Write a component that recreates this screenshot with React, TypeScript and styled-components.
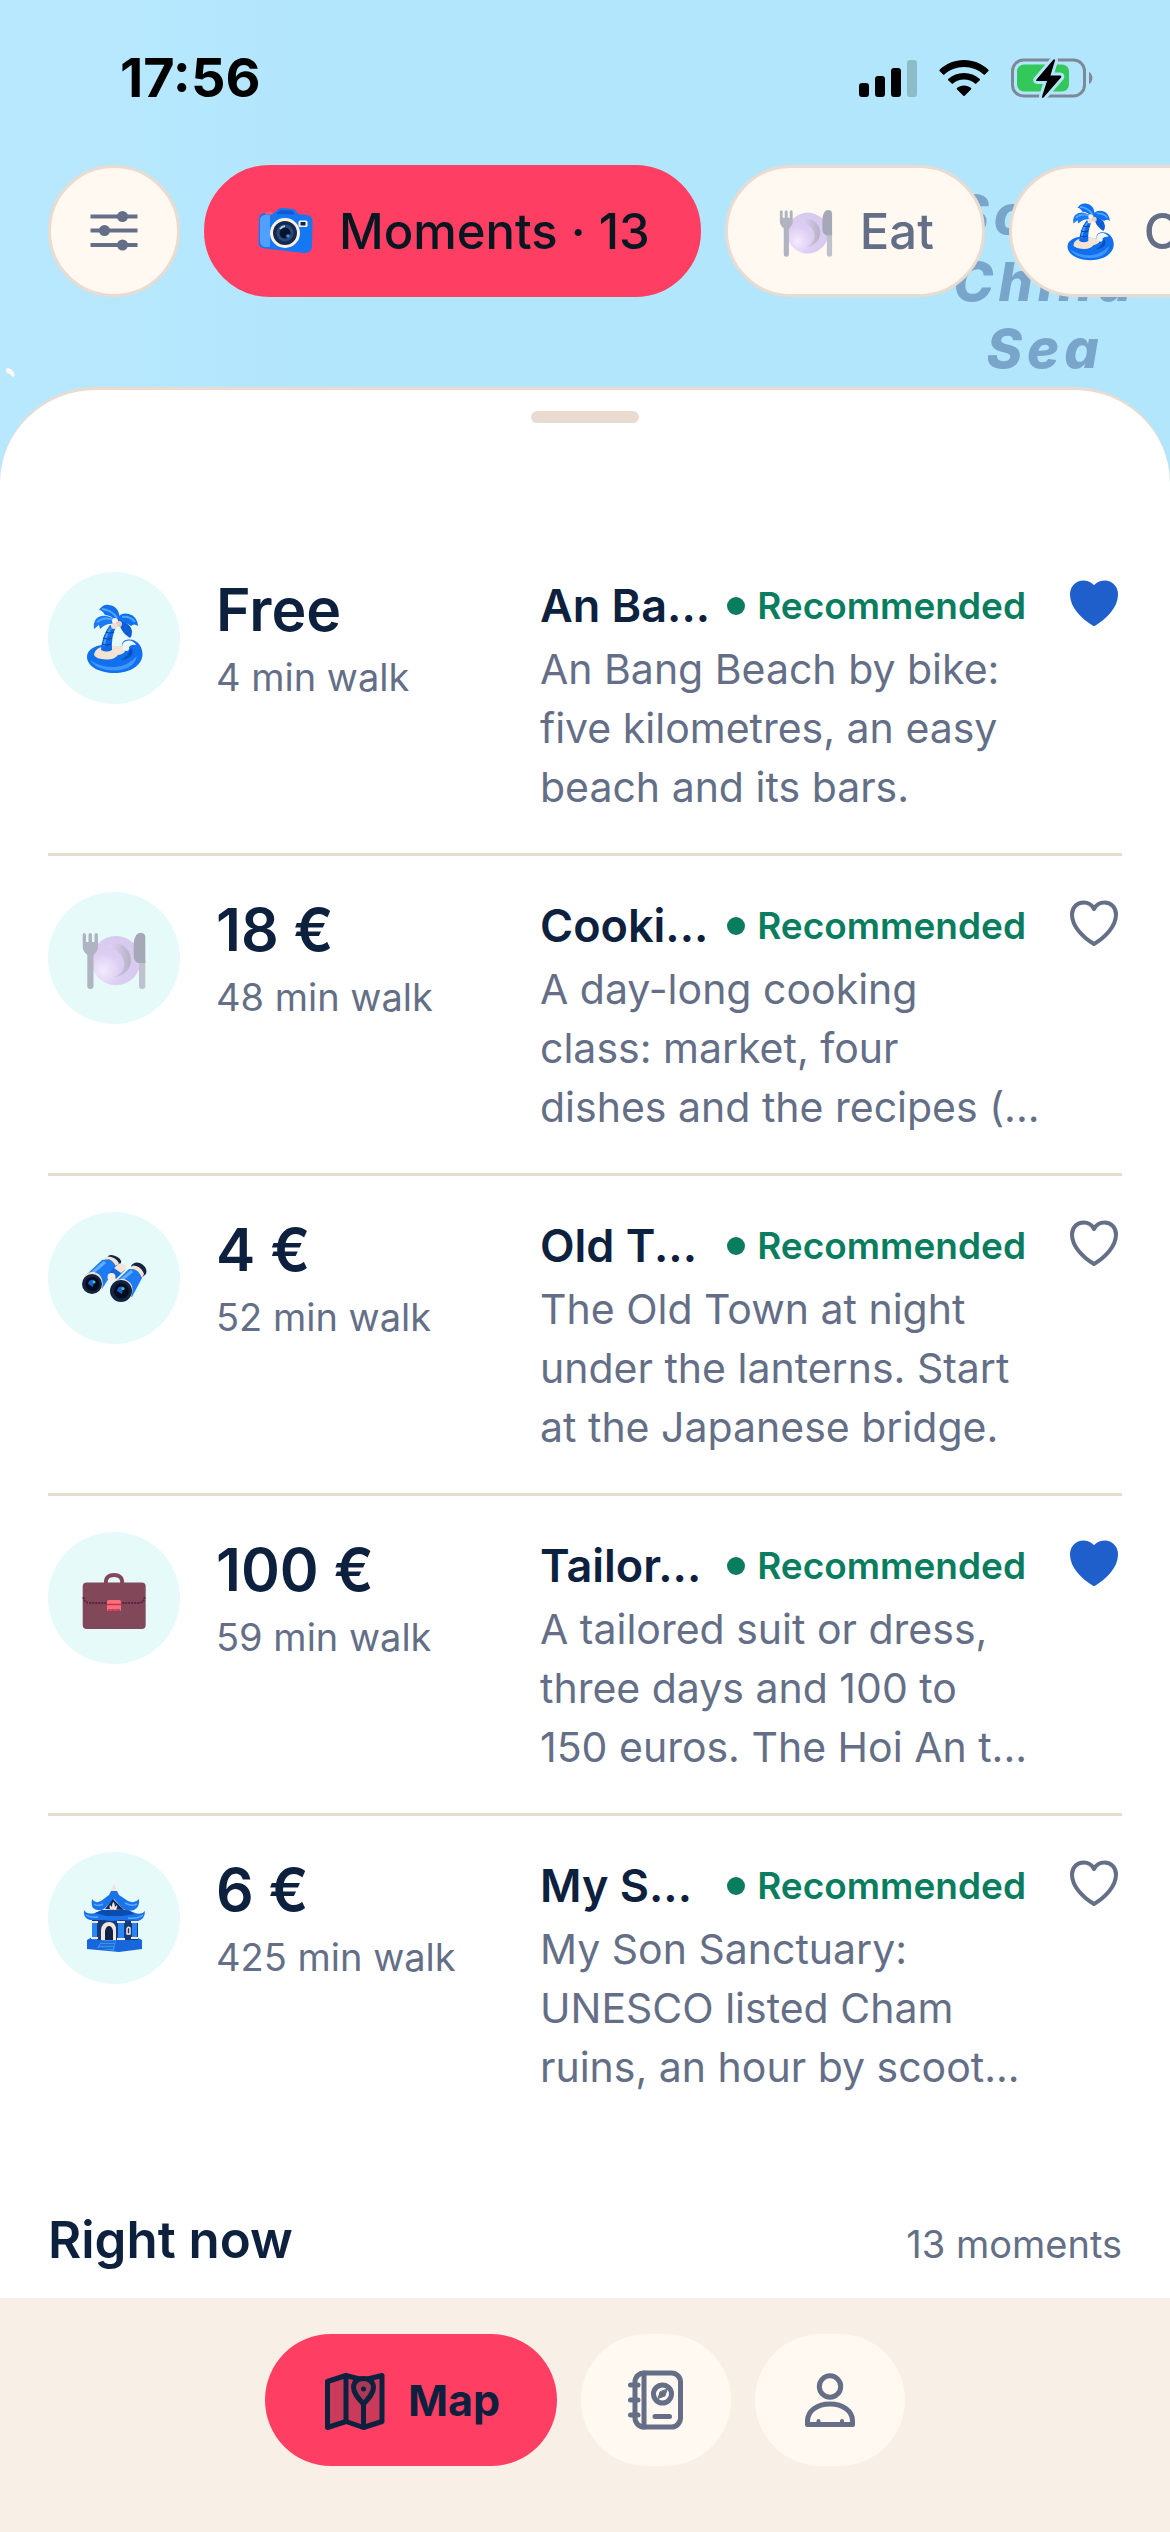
import React, { useState } from "react";
import styled, { createGlobalStyle } from "styled-components";

const Colour = {
  sky: "#b2e6fc",
  label: "#79a5cb",
  primary: "#ff3e63",
  cream: "#fff9f2",
  sand: "#f8efe6",
  border: "#eadbd0",
  navy: "#0d213f",
  ink: "#061722",
  grey: "#646f87",
  green: "#0a7d5f",
  heart: "#1f5fcc",
  mint: "#e6fafa",
};

interface IMoment {
  id: string;
  icon: React.ReactNode;
  price: string;
  walk: string;
  name: string;
  lines: string;
  saved: boolean;
}

const GlobalStyle = createGlobalStyle`
  * {
    box-sizing: border-box;
  }
  body {
    margin: 0;
    background: ${Colour.sky};
    font-family: Inter, "Liberation Sans", sans-serif;
    color: ${Colour.navy};
  }
  button {
    font-family: inherit;
    margin: 0;
    cursor: pointer;
  }
`;

const Screen = styled.div`
  position: relative;
  min-height: 100vh;
  display: flex;
  flex-direction: column;
  overflow: hidden;
  background: linear-gradient(90deg, #b8e8fe 0, ${Colour.sky} 30%);
`;

const SeaLabel = styled.div`
  position: absolute;
  top: 181px;
  right: 23px;
  width: 204px;
  color: ${Colour.label};
  font-size: 54px;
  line-height: 67px;
  font-weight: 800;
  font-style: italic;
  letter-spacing: 5px;
  text-align: center;
`;

const Islet = styled.svg`
  position: absolute;
  top: 366px;
  left: 3px;
`;

const StatusBar = styled.div`
  position: relative;
  display: flex;
  justify-content: space-between;
  padding: 48px 76px 57px 120px;
  color: #000;
`;

const Time = styled.time`
  font-size: 54px;
  line-height: 60px;
  font-weight: 700;
`;

const StatusIcons = styled.div`
  display: flex;
  align-items: center;
  gap: 22px;
  height: 60px;
`;

const Filters = styled.div`
  position: relative;
  display: flex;
  gap: 24px;
  padding: 0 0 0 48px;
  margin-bottom: 90px;
  overflow: hidden;
`;

const Chip = styled.button<{ $active?: boolean }>`
  flex: none;
  display: flex;
  align-items: center;
  gap: 24px;
  height: 132px;
  padding: 0 48px;
  border: 3px solid ${(props) => (props.$active ? Colour.primary : Colour.border)};
  border-radius: 66px;
  background: ${(props) => (props.$active ? Colour.primary : Colour.cream)};
  color: ${(props) => (props.$active ? Colour.ink : Colour.grey)};
  font-size: 49px;
  font-weight: 500;
  white-space: nowrap;
`;

const RoundChip = styled(Chip)`
  width: 132px;
  padding: 0;
  justify-content: center;
`;

const Sheet = styled.main`
  position: relative;
  flex: 1;
  padding: 21px 48px 0;
  border-top: 3px solid ${Colour.border};
  border-radius: 96px 96px 0 0;
  background: #fff;
`;

const Handle = styled.div`
  width: 108px;
  height: 12px;
  margin: 0 auto 113px;
  border-radius: 6px;
  background: ${Colour.border};
`;

const List = styled.ul`
  margin: 0;
  padding: 0;
  list-style: none;
`;

const Item = styled.li`
  display: grid;
  grid-template-columns: 132px 288px minmax(0, 1fr) 60px;
  gap: 36px;
  padding: 36px 0;
  border-bottom: 3px solid ${Colour.border};
  &:last-child {
    border-bottom: none;
  }
`;

const Bubble = styled.div`
  display: flex;
  align-items: center;
  justify-content: center;
  width: 132px;
  height: 132px;
  border-radius: 50%;
  background: ${Colour.mint};
`;

const Price = styled.div`
  font-size: 59px;
  line-height: 75px;
  font-weight: 600;
`;

const Walk = styled.div`
  font-size: 38px;
  line-height: 60px;
  color: ${Colour.grey};
  white-space: nowrap;
`;

const TitleRow = styled.div`
  display: flex;
  align-items: center;
  justify-content: space-between;
`;

const Name = styled.h3`
  margin: 0;
  font-size: 45px;
  line-height: 68px;
  font-weight: 600;
  white-space: nowrap;
`;

const Tag = styled.span`
  display: flex;
  align-items: center;
  gap: 12px;
  color: ${Colour.green};
  font-size: 37px;
  line-height: 68px;
  font-weight: 600;
  &::before {
    content: "";
    width: 18px;
    height: 18px;
    border-radius: 50%;
    background: ${Colour.green};
  }
`;

const Description = styled.p`
  margin: 0;
  font-size: 41px;
  line-height: 59px;
  color: ${Colour.grey};
  white-space: pre;
`;

const HeartButton = styled.button`
  display: block;
  width: 60px;
  height: 60px;
  padding: 8px 4px 4px 8px;
  border: none;
  background: none;
`;

const SectionHead = styled.header`
  display: flex;
  align-items: baseline;
  justify-content: space-between;
  padding: 74px 0 24px;
`;

const SectionTitle = styled.h2`
  margin: 0;
  font-size: 51px;
  line-height: 66px;
  font-weight: 600;
`;

const Count = styled.span`
  font-size: 38px;
  color: ${Colour.grey};
`;

const TabBar = styled.nav`
  position: relative;
  display: flex;
  justify-content: center;
  gap: 24px;
  padding: 36px 0 66px;
  background: ${Colour.sand};
`;

const Tab = styled.button<{ $active?: boolean }>`
  display: flex;
  align-items: center;
  justify-content: center;
  gap: 20px;
  min-width: 150px;
  height: 132px;
  padding: 0 ${(props) => (props.$active ? "57px" : "0")};
  border: none;
  border-radius: 66px;
  background: ${(props) => (props.$active ? Colour.primary : Colour.cream)};
  color: ${(props) => (props.$active ? Colour.navy : Colour.grey)};
  font-size: 43px;
  font-weight: 700;
`;

const SignalIcon = () => (
  <svg width="58" height="38" viewBox="0 0 58 38">
    <rect x="0" y="24" width="10" height="14" rx="3" />
    <rect x="16" y="17" width="10" height="21" rx="3" />
    <rect x="32" y="9" width="10" height="29" rx="3" />
    <rect x="48" y="1" width="10" height="37" rx="3" fill="#8dbcc6" />
  </svg>
);

const WifiIcon = () => (
  <svg width="50" height="38" viewBox="0 0 50 38">
    <path d="M25 1C15.600 1 7 4.700 0.600 10.700Q0 11.400 0.600 12L4 15.500Q4.700 16.100 5.400 15.500C10.600 10.800 17.400 8 25 8S39.400 10.800 44.600 15.500Q45.300 16.100 46 15.500L49.400 12Q50 11.400 49.400 10.700C43 4.700 34.400 1 25 1Z" />
    <path d="M25 14C19 14 13.400 16.200 9.200 20Q8.600 20.600 9.200 21.200L12.700 24.600Q13.300 25.200 14 24.600C17 22 20.800 20.500 25 20.500S33 22 36 24.600Q36.700 25.200 37.300 24.600L40.800 21.200Q41.400 20.600 40.800 20C36.600 16.200 31 14 25 14Z" />
    <path d="M25 26.500C22.300 26.500 19.800 27.400 17.900 29Q17.300 29.600 17.900 30.200L24.300 36.700Q25 37.400 25.700 36.700L32.100 30.200Q32.700 29.600 32.100 29C30.200 27.400 27.700 26.500 25 26.500Z" />
  </svg>
);

const BatteryIcon = () => (
  <svg width="83" height="44" viewBox="0 0 83 44">
    <rect x="1.500" y="4" width="72" height="36" rx="11" fill="none" stroke="#7d8898" strokeWidth="3" />
    <path d="M78 16C82.500 18 82.500 26 78 28Z" fill="#7d8898" />
    <rect x="6" y="8.500" width="52" height="27" rx="7" fill="#34c759" />
    <path
      d="M42.500 3.500 25.500 23.500Q24.500 25 26.500 25H36L31 40.500Q31 43 33 41L50 21.500Q51 19.500 49 19.500H39.500L44 4.500Q44 2.500 42.500 3.500Z"
      stroke={Colour.sky}
      strokeWidth="6"
      paintOrder="stroke"
    />
  </svg>
);

const SlidersIcon = () => (
  <svg width="48" height="48" viewBox="0 0 48 48" fill={Colour.grey} stroke={Colour.grey}>
    <path d="M.5 9.500H47.500M.5 23.500H47.500M.5 38H47.500" strokeWidth="4" />
    <circle cx="32.500" cy="9.500" r="5.500" stroke="none" />
    <circle cx="14.500" cy="23.500" r="5.500" stroke="none" />
    <circle cx="32.500" cy="38" r="5.500" stroke="none" />
  </svg>
);

const CameraIcon = () => (
  <svg width="60" height="60" viewBox="0 0 60 60">
    <path
      d="M4 17Q5 12 11 12H19L23 8.500Q24 7 27 7L38 8Q40 8 41 10L43 13L52 14Q58 15 57.500 21L57 46Q56 52 49 52L10 47.500Q3.500 47 3.500 41Z"
      fill="#1677f2"
    />
    <path d="M5 18Q6 14 12 13.500L15 14V46L10 46Q5 45 5 40Z" fill="#4fa0ff" />
    <path d="M21 13 25 9.500H37L40 13.500Z" fill="#0d5bd0" />
    <path d="M10 13.500Q10 10.500 14 10.500T18 13.500Z" fill="#ff5b6e" />
    <rect x="43.500" y="19.500" width="9" height="6.500" rx="1.500" fill="#fff5ea" />
    <rect x="45.500" y="21" width="5" height="3.500" fill="#0f2347" />
    <circle cx="30" cy="32" r="15" fill="#fff1e2" />
    <circle cx="30" cy="32" r="12" fill="#14294f" />
    <circle cx="30" cy="32" r="8.500" fill="#2b4a78" />
    <circle cx="30" cy="32" r="5.500" fill="#07152c" />
    <path d="M25 28Q27 25.500 30 25" fill="none" stroke="#a9c8ee" strokeWidth="2" />
    <circle cx="33" cy="35" r="1.800" fill="#3d8df5" />
  </svg>
);

const PlateIcon = ({ size = 72 }: { size?: number }) => (
  <svg width={size} height={size} viewBox="0 0 72 72">
    <defs>
      <radialGradient id="plate" cx="25%" cy="70%" r="70%">
        <stop offset="0" stopColor="#f3ebff" />
        <stop offset="0.500" stopColor="#dccdf2" />
        <stop offset="1" stopColor="#d8c9ee" />
      </radialGradient>
      <linearGradient id="dish" x1="0" y1="0" x2="1" y2="0">
        <stop offset="0.300" stopColor="#dccdf2" />
        <stop offset="1" stopColor="#b4b2c2" />
      </linearGradient>
    </defs>
    <circle cx="38" cy="38.500" r="24.600" fill="url(#plate)" />
    <path d="M25 25A17 17 0 1 1 36 55C52 50 50 27 25 25Z" fill="url(#dish)" />
    <path
      d="M4.700 13Q4.700 11 6.300 11T8 13V20H10.500V13Q10.500 11 12.200 11T14 13V20H16.500V13Q16.500 11 18.200 11T20 13V25Q20 29 15.500 33V64Q15.500 67 12.400 67T9.300 64V33Q4.700 29 4.700 25Z"
      fill="#b0b3c0"
    />
    <path d="M61 38H67.300V64Q67.300 67 64.200 67T61 64Z" fill="#bfc1cd" />
    <path d="M67.300 41H60Q55.700 39 55.700 34V21Q57 10.700 62.500 10.700T67.300 17Z" fill="#a5a8b6" />
  </svg>
);

const PalmIcon = ({ size = 72 }: { size?: number }) => (
  <svg width={size} height={size} viewBox="0 0 72 72">
    <path
      d="M9 55C9 48 16 44 24 43L44 45Q43 38 50 37.500C60 37 64.500 45 64.500 52C64.500 64 51 71 36.500 71C21 71 9 64 9 55Z"
      fill="#1170ee"
    />
    <path d="M12 58Q24 66 37 65T59 54Q56 68 36 68.500Q18 68 12 58Z" fill="#3f97fb" />
    <path d="M16 53Q17 44 32 44Q46 43 47 49Q46 52 40 53Q36 58 28 57.500Q18 57 16 53Z" fill="#f2e3d3" />
    <path d="M44 45Q44 38 52 38.500Q57 40 58 43Q53 42 51 45Q52 48 49 49Q45 49 44 45Z" fill="#eef7ff" />
    <path d="M52 46Q56 48 54 53Q51 57 43 58Q52 53 52 46Z" fill="#0a4fbd" />
    <path d="M23 48Q24 33 32 23L38 25Q33 35 34 48Q29 51 23 48Z" fill="#0f69e8" />
    <path d="M26 44Q27 34 33 26" fill="none" stroke="#4aa0ff" strokeWidth="2" />
    <path d="M24 42Q29 44 33 42M25 36Q30 38 34 36M28 30Q32 32 36 30" fill="none" stroke="#083f9c" strokeWidth="1.200" />
    <path d="M38 19Q33 13 27 13Q24 8 21 8Q25 2 31 3Q41 4 42 17Z" fill="#1170ee" />
    <path d="M38 18Q25 10 18 17Q15 21 16 27L21 23L22 27Q28 21 36 22Z" fill="#1a7bf5" />
    <path d="M39 17Q43 10 51 12Q59 14 60 24Q56 21 53 24Q48 20 40 21Z" fill="#1170ee" />
    <path d="M40 19Q53 20 54 30Q54 34 52 36Q44 31 42 24Z" fill="#0d5ed6" />
    <path d="M24 7Q34 8 39 16M19 20Q26 14 36 18M44 15Q52 14 57 20" fill="none" stroke="#4fa6ff" strokeWidth="2" />
    <circle cx="37" cy="19" r="3" fill="#fbeee4" />
    <circle cx="41" cy="22" r="3" fill="#e5cfc4" />
    <circle cx="36" cy="24" r="3" fill="#f1dfd5" />
  </svg>
);

const BinocularsIcon = () => (
  <svg width="72" height="72" viewBox="0 0 72 72">
    <path d="M29 16Q30 12 36 13.500Q44 16 43 21L37 27Z" fill="#14233f" />
    <path d="M53 24Q56 19 62 21Q70 25 68 32L62 37Z" fill="#14233f" />
    <path d="M7 34 24 18Q35 15 38 25L24 47Z" fill="#1d7cf3" />
    <path d="M13 32 27 20" stroke="#62aeff" strokeWidth="3" />
    <path d="M35 42 51 27Q61 26 64 36L54 55Z" fill="#1d7cf3" />
    <path d="M42 39 54 29" stroke="#62aeff" strokeWidth="3" />
    <path d="M25 17.500Q34 15 38 25L41 21Q37 14 29 14.500Z" fill="#f4e4d6" />
    <path d="M51 26.500Q60 26 64 36L66 32Q63 24 55 23.500Z" fill="#f4e4d6" />
    <path d="M31 31 38 23L47 28L38 37Z" fill="#1567da" />
    <path d="M36 26 41 21.500Q49 21 48 27L43 31Z" fill="#f4e4d6" />
    <circle cx="33.500" cy="35" r="4" fill="#f8ecdf" />
    <path d="M5 37Q8 29 16 30Q27 33 24 48Z" fill="#f4e4d6" />
    <path d="M33 44Q37 36 46 37Q58 41 53 55Z" fill="#f4e4d6" />
    <circle cx="14" cy="42" r="10" fill="#14233f" />
    <circle cx="14.500" cy="42" r="7" fill="#040d1e" />
    <path d="M10 42Q11 37 16 38L15 45Z" fill="#1e5fd0" />
    <circle cx="16" cy="40" r="1.500" fill="#36d0c0" />
    <circle cx="43" cy="49" r="11" fill="#14233f" />
    <circle cx="43.500" cy="49" r="7.500" fill="#040d1e" />
    <path d="M39 49Q40 43 45 45L44 52Z" fill="#1e5fd0" />
    <circle cx="45" cy="46.500" r="1.500" fill="#36d0c0" />
  </svg>
);

const BriefcaseIcon = () => (
  <svg width="72" height="72" viewBox="0 0 72 72">
    <path d="M28 22Q27 13 36 13T44 22" fill="none" stroke="#82485a" strokeWidth="4" />
    <rect x="4.700" y="20.500" width="63" height="46.500" rx="4" fill="#82485a" />
    <path d="M5.500 35Q6 41 12 41H60Q66 41 66.500 35" fill="none" stroke="#5f2340" strokeWidth="2" strokeDasharray="2 1" />
    <rect x="29" y="38" width="14" height="11" rx="1.500" fill="#f9707c" />
    <path d="M29 42.500H43M30 48H42" stroke="#c9304f" strokeWidth="1.500" />
    <path d="M10 48H64M14 56H62M9 63H64" stroke="#5e5468" strokeWidth="1" strokeDasharray="1 5" />
  </svg>
);

const TempleIcon = () => (
  <svg width="72" height="72" viewBox="0 0 72 72">
    <path d="M36 2Q39 6 38 10H33Q33 6 36 2Z" fill="#f0e4de" />
    <path d="M9 58 14 55H58L64 58V67L41 70L9 67Z" fill="#1766dc" />
    <rect x="14" y="38" width="46" height="20" fill="#123a7c" />
    <path d="M14 40H19V58H14ZM40 40H46V58H40ZM54 40H59V57H54Z" fill="#2b86f5" />
    <path d="M13 40H20M39 40H47M53 40H60M13 56H20M39 57H47M53 56H60" stroke="#f3e6dc" strokeWidth="2" />
    <path d="M23 58V48Q24 40 31 40T38 48V58Z" fill="#f3e6dc" />
    <path d="M27 58V49Q28 44 31 44T35 49V58Z" fill="#0f2347" />
    <path d="M49 52V47Q50 44 52 46V52Z" fill="none" stroke="#f3e6dc" strokeWidth="1.500" />
    <path
      d="M6 28Q9 33 17 31L24 28H50L57 31Q64 33 67 29Q67 37 60 39L43 38Q34 40 26 38L12 38Q5 36 6 28Z"
      fill="#1a73ea"
    />
    <path d="M17 31 24 28H50L57 32L44 34H28Z" fill="#0d4caf" />
    <path
      d="M14 17Q17 22 23 19L31 13L33 9H39L41 13L50 19Q57 22 61 17Q62 25 56 28Q50 30 45 27L36 17L26 27Q20 30 15 26Q13 23 14 17Z"
      fill="#1a73ea"
    />
    <path d="M27 27 35 17L46 28Z" fill="#102a5c" />
    <path d="M32 27Q31 24 32 23L34 25Q34 21 35.500 20Q37 22 37 25L39 23Q40 25 38 28Z" fill="#f3e6dc" />
    <path d="M8 33Q12 36 20 35M50 36Q60 37 65 33M16 22Q19 25 25 22M47 21Q54 25 59 22" fill="none" stroke="#5aaaff" strokeWidth="1.500" />
    <path d="M24 58H38L36 69L19 66Z" fill="#3990f7" />
    <path d="M23 60H37M22 63H36M21 66H35" stroke="#0d4caf" strokeWidth="1" />
  </svg>
);

const HeartIcon = ({ filled }: { filled: boolean }) => (
  <svg width="48" height="48" viewBox="0 0 48 48">
    <path
      d="M24 44C13 37.500 2 26.500 2 14.500C2 7.500 7 2.500 13.500 2.500C18 2.500 22 5 24 9C26 5 30 2.500 34.500 2.500C41 2.500 46 7.500 46 14.500C46 26.500 35 37.500 24 44Z"
      fill={filled ? Colour.heart : "none"}
      stroke={filled ? Colour.heart : Colour.grey}
      strokeWidth="4"
      strokeLinejoin="round"
    />
  </svg>
);

const MapIcon = () => (
  <svg width="66" height="66" viewBox="0 0 66 66" fill="none" stroke={Colour.navy} strokeWidth="5" strokeLinejoin="round" strokeLinecap="round">
    <path d="M5.500 14.500 24 8.500 41.500 13 60 8.500V54.500L41.500 60.500 24 54.500 5.500 60.500Z" fill="#cb3a5b" />
    <path d="M24 9V54M41.500 36V60" />
    <path d="M41.500 37C36 31 31.500 26 31.500 20.500Q32 11.500 41.500 11.500T51.500 20.500C51.500 26 47 31 41.500 37Z" fill="#a83a58" />
    <circle cx="41.500" cy="22" r="2.500" fill={Colour.navy} stroke="none" />
  </svg>
);

const JournalIcon = () => (
  <svg width="66" height="66" viewBox="0 0 66 66" fill="none" stroke={Colour.grey} strokeWidth="5" strokeLinejoin="round" strokeLinecap="round">
    <rect x="12" y="6" width="45.500" height="54" rx="9" />
    <path d="M21 6V60M7.500 18H15M7.500 33H15M7.500 48H15M32 49.500H46.500" />
    <circle cx="39.500" cy="27" r="9" />
    <path d="M44 22.500 42 29 35 31.500 37 25Z" fill={Colour.grey} strokeWidth="1" />
  </svg>
);

const ProfileIcon = () => (
  <svg width="66" height="66" viewBox="0 0 66 66" fill="none" stroke={Colour.grey} strokeWidth="5" strokeLinejoin="round" strokeLinecap="round">
    <circle cx="33" cy="19.500" r="10.700" />
    <path d="M10.500 57.500V54C10.500 44 20 37 33 37S55.500 44 55.500 54V57.500Z" />
    <path d="M21.500 54V57M45 54V57" strokeWidth="4" />
  </svg>
);

const moments: IMoment[] = [
  {
    id: "an-bang",
    icon: <PalmIcon />,
    price: "Free",
    walk: "4 min walk",
    name: "An Ba...",
    lines: "An Bang Beach by bike:\nfive kilometres, an easy\nbeach and its bars.",
    saved: true,
  },
  {
    id: "cooking",
    icon: <PlateIcon />,
    price: "18 €",
    walk: "48 min walk",
    name: "Cooki...",
    lines: "A day-long cooking\nclass: market, four\ndishes and the recipes (...",
    saved: false,
  },
  {
    id: "old-town",
    icon: <BinocularsIcon />,
    price: "4 €",
    walk: "52 min walk",
    name: "Old T...",
    lines: "The Old Town at night\nunder the lanterns. Start\nat the Japanese bridge.",
    saved: false,
  },
  {
    id: "tailor",
    icon: <BriefcaseIcon />,
    price: "100 €",
    walk: "59 min walk",
    name: "Tailor...",
    lines: "A tailored suit or dress,\nthree days and 100 to\n150 euros. The Hoi An t...",
    saved: true,
  },
  {
    id: "my-son",
    icon: <TempleIcon />,
    price: "6 €",
    walk: "425 min walk",
    name: "My S...",
    lines: "My Son Sanctuary:\nUNESCO listed Cham\nruins, an hour by scoot...",
    saved: false,
  },
];

const MomentRow = ({ moment }: { moment: IMoment }) => {
  const [saved, setSaved] = useState(moment.saved);

  return (
    <Item>
      <Bubble>{moment.icon}</Bubble>
      <div>
        <Price>{moment.price}</Price>
        <Walk>{moment.walk}</Walk>
      </div>
      <div>
        <TitleRow>
          <Name>{moment.name}</Name>
          <Tag>Recommended</Tag>
        </TitleRow>
        <Description>{moment.lines}</Description>
      </div>
      <HeartButton
        type="button"
        aria-label="Save"
        aria-pressed={saved}
        onClick={() => setSaved(!saved)}
      >
        <HeartIcon filled={saved} />
      </HeartButton>
    </Item>
  );
};

const App = () => (
  <Screen>
    <GlobalStyle />
    <SeaLabel>
      South
      <br />
      China
      <br />
      Sea
    </SeaLabel>
    <Islet width="14" height="14" viewBox="0 0 14 14">
      <path d="M3 3Q7 1 10 5Q13 9 10 11Q8 11 7 8Q2 7 3 3Z" fill="#fff9f2" />
    </Islet>

    <StatusBar>
      <Time>17:56</Time>
      <StatusIcons>
        <SignalIcon />
        <WifiIcon />
        <BatteryIcon />
      </StatusIcons>
    </StatusBar>

    <Filters>
      <RoundChip type="button" aria-label="Filters">
        <SlidersIcon />
      </RoundChip>
      <Chip type="button" $active>
        <CameraIcon />
        Moments · 13
      </Chip>
      <Chip type="button">
        <PlateIcon size={60} />
        Eat
      </Chip>
      <Chip type="button">
        <PalmIcon size={60} />
        Outdoors
      </Chip>
    </Filters>

    <Sheet>
      <Handle />
      <List>
        {moments.map((moment) => (
          <MomentRow key={moment.id} moment={moment} />
        ))}
      </List>
      <SectionHead>
        <SectionTitle>Right now</SectionTitle>
        <Count>13 moments</Count>
      </SectionHead>
    </Sheet>

    <TabBar>
      <Tab type="button" $active>
        <MapIcon />
        Map
      </Tab>
      <Tab type="button" aria-label="Journal">
        <JournalIcon />
      </Tab>
      <Tab type="button" aria-label="Profile">
        <ProfileIcon />
      </Tab>
    </TabBar>
  </Screen>
);

export default App;
